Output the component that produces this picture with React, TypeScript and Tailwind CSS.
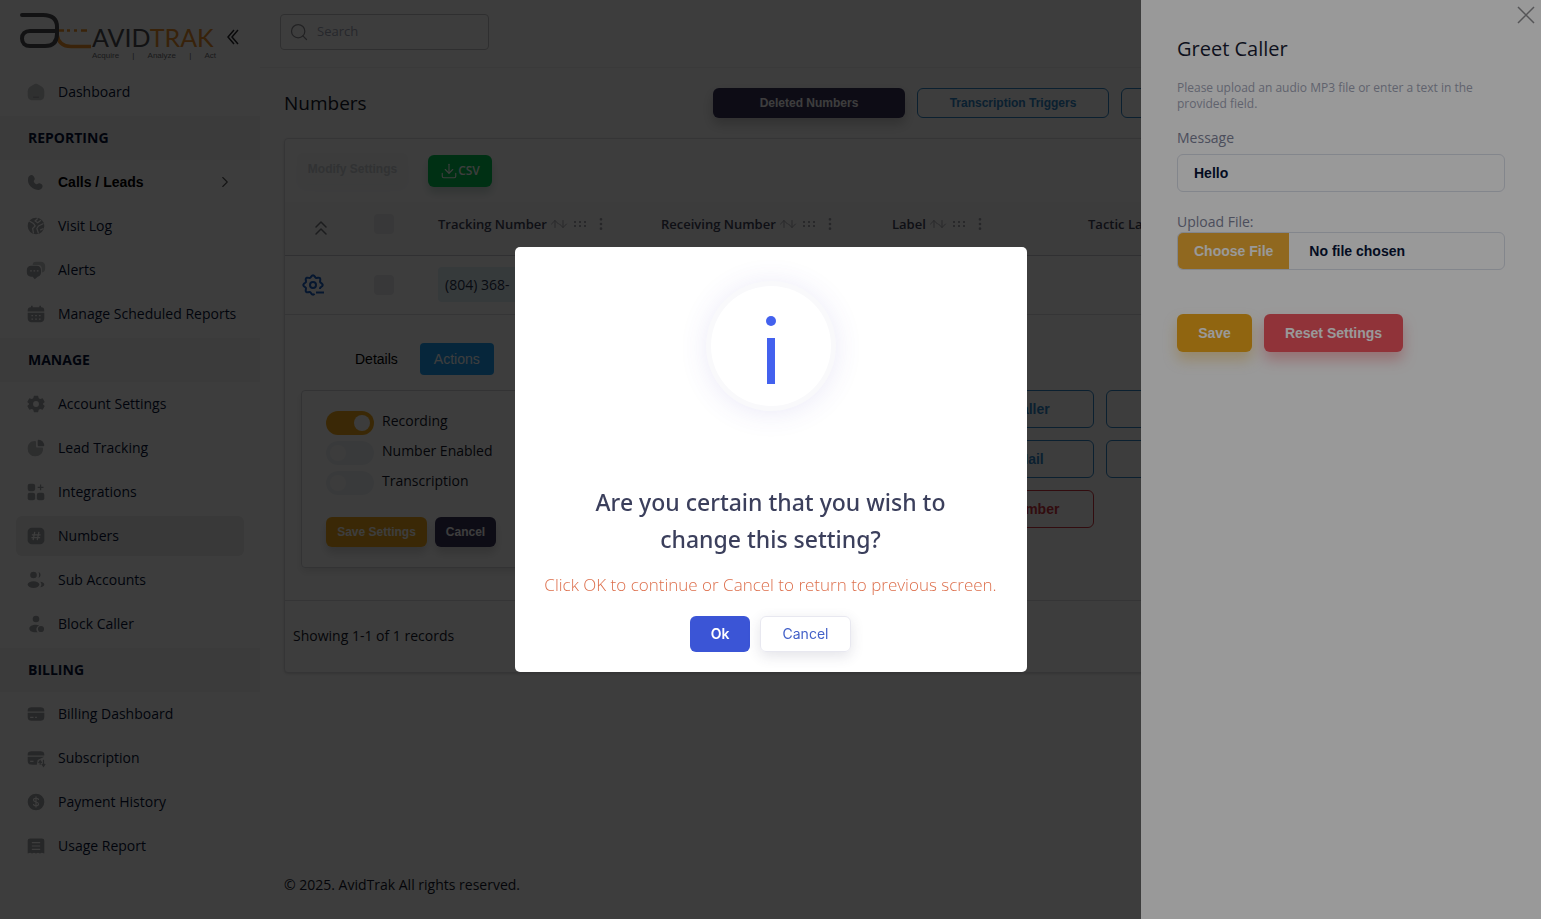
import { useState } from "react";
import type { ReactNode } from "react";
import clsx from "clsx";
import { ArrowDown, ArrowUp, ChevronRight, ChevronsUp, Download, EllipsisVertical, Search } from "lucide-react";

const icons: Record<string, ReactNode> = {
  home: (
    <>
      <path opacity="0.6" d="M12 2c-1 0-1.7.4-3.2 1.3l-3 1.9C3.8 6.5 2 8 2 11.5v3C2 19.5 3 22 8 22h8c5 0 6-2.5 6-7.5v-3c0-3.5-1.8-5-3.8-6.3l-3-1.9C13.7 2.4 13 2 12 2z" />
      <path d="M8.5 17.5h7v1.5h-7z" />
    </>
  ),
  phone: (
    <path d="M9.5 5.7l.7 1.2c.6 1.1.3 2.5-.6 3.4 0 0-1.1 1.1 1 3.1 2 2 3.1 1 3.1 1 .9-.9 2.3-1.2 3.4-.6l1.2.7c2 1 2.2 3.6.5 5.2-1 1-2.2 1.7-3.5 1.8-2.2.1-6-.5-9.7-4.2C1.9 13.6 2.4 9.7 2.5 8c0-1.3.8-2.6 1.8-3.5C5.9 2.8 8.5 3.7 9.5 5.7z" />
  ),
  globe: (
    <>
      <circle cx="12" cy="12" r="10" />
      <path d="M4 6l5 3 2 3-3 3 1 6M14 3l-3 3 3 2 4-3M21 9l-6 3-2 3 2 6M21 15l-4 2" fill="none" stroke="#fff" strokeWidth="1.5" />
    </>
  ),
  chat: (
    <>
      <path opacity="0.6" d="M12 2h6c3 0 5 2 5 5v3c0 3-1 5-4 5V11c0-3-1-5-4-5H8c0-3 1-4 4-4z" />
      <path d="M6 7h7c3 0 5 2 5 5v3c0 3-2 5-4 5l-3.5 3L8 20H6c-3 0-5-2-5-5v-3c0-3 2-5 5-5z" />
      <path d="M5 13h2M9 13h2M13 13h2" stroke="#fff" strokeWidth="1.5" />
    </>
  ),
  calendar: (
    <>
      <path d="M6 2h2v2h8V2h2v2c3 0 4 1 4 5H2c0-4 1-5 4-5zM2 10.5h20V16c0 4-1 6-6 6H8c-5 0-6-2-6-6z" />
      <path d="M6.5 14h2M11 14h2M15.5 14h2M6.5 18h2M11 18h2M15.5 18h2" stroke="#fff" strokeWidth="1.5" />
    </>
  ),
  gear: (
    <path
      fillRule="evenodd"
      d="M9.5 2h5l.8 3 1.7 1 3-.8 2.5 4.3-2.2 2.2v.6l2.2 2.2-2.5 4.3-3-.8-1.7 1-.8 3h-5l-.8-3-1.7-1-3 .8-2.5-4.3 2.2-2.2v-.6L1.5 9.5 4 5.2l3 .8 1.7-1zM12 8.5a3.5 3.5 0 100 7 3.5 3.5 0 000-7z"
    />
  ),
  pie: (
    <>
      <path opacity="0.7" d="M10.5 3.5C5 3.5 2 7.5 2 12.5a9 9 0 009.5 9.5c5 0 9-3.5 9-9 0-1-.5-1.5-1.5-1.5h-5c-1.5 0-2-.5-2-2V5c0-1-.5-1.5-1.5-1.5z" />
      <path d="M14 3.5C14 2.5 14.5 2 15.5 2 19 2.5 21.5 5 22 8.5c0 1-.5 1.5-1.5 1.5H16c-1.5 0-2-.5-2-2z" />
    </>
  ),
  widget: (
    <>
      <rect x="2" y="2" width="9" height="9" rx="2.5" />
      <rect x="2" y="13" width="9" height="9" rx="2.5" />
      <rect x="13" y="13" width="9" height="9" rx="2.5" />
      <path d="M17.5 3v7M14 6.5h7" stroke="currentColor" strokeWidth="1.5" />
    </>
  ),
  hash: (
    <>
      <rect x="2" y="2" width="20" height="20" rx="5" />
      <path d="M10.5 7l-2 10M15.5 7l-2 10M7 10.5h10.5M6.5 14H17" stroke="#fff" strokeWidth="1.5" />
    </>
  ),
  users: (
    <>
      <circle cx="9" cy="6" r="4" />
      <ellipse cx="9" cy="17.5" rx="7" ry="4" />
      <path d="M15 2.5a3.7 3.7 0 010 7c1-2 1-5 0-7zM17 14c3 .3 5 1.6 5 3.5s-2 3-5 3.3c2-2 2-4.8 0-6.8z" />
    </>
  ),
  blocked: (
    <>
      <circle cx="12" cy="6" r="4" />
      <path d="M12 13c-5 0-8 2-8 4.5S6 22 12 22h2a5 5 0 012-8.4c-1.2-.4-2.5-.6-4-.6z" />
      <circle cx="18" cy="18" r="3.7" />
    </>
  ),
  card: (
    <>
      <path d="M8 4h8c5 0 6 1 6 5H2c0-4 1-5 6-5zM2 10.5h20V14c0 5-1 6-6 6H8c-5 0-6-1-6-6z" />
      <path d="M5 16h4M11 16h2" stroke="#fff" strokeWidth="1.5" />
    </>
  ),
  cardSync: (
    <>
      <path d="M8 4h8c5 0 6 1 6 5H2c0-4 1-5 6-5zM2 10.5h20l-8 4-1 5.5H8c-5 0-6-1-6-6z" />
      <path d="M5 16h4" stroke="#fff" strokeWidth="1.5" />
      <path d="M15 18l2-3 2 3M17 15v5M19 19l2 3 2-3M21 14v8" fill="none" stroke="currentColor" strokeWidth="1.4" />
    </>
  ),
  dollar: (
    <>
      <circle cx="12" cy="12" r="10" />
      <path d="M15 9.5C15 8 13.7 7.5 12 7.5s-3 .8-3 2.2c0 3.2 6 1.4 6 4.6 0 1.4-1.3 2.2-3 2.2s-3-.8-3-2.2M12 5.5v13" fill="none" stroke="#fff" strokeWidth="1.4" />
    </>
  ),
  receipt: (
    <>
      <path d="M5 3h14c2 0 3 1 3 3v15l-3-1-2.3 1-2.3-1-2.4 1-2.4-1-2.3 1L5 20l-3 1V6c0-2 1-3 3-3z" />
      <path d="M7 8h10M7 12h10M7 16h10" stroke="#fff" strokeWidth="1.4" />
    </>
  ),
};

function NavIcon({ name }: { name: string }) {
  return (
    <svg viewBox="0 0 24 24" className="size-5 shrink-0 text-[#a0a2a6]" fill="currentColor" aria-hidden="true">
      {icons[name]}
    </svg>
  );
}

type NavItem = { label: string; icon: string; active?: boolean; expandable?: boolean };

const sections: { title?: string; items: NavItem[] }[] = [
  { items: [{ label: "Dashboard", icon: "home" }] },
  {
    title: "REPORTING",
    items: [
      { label: "Calls / Leads", icon: "phone", expandable: true },
      { label: "Visit Log", icon: "globe" },
      { label: "Alerts", icon: "chat" },
      { label: "Manage Scheduled Reports", icon: "calendar" },
    ],
  },
  {
    title: "MANAGE",
    items: [
      { label: "Account Settings", icon: "gear" },
      { label: "Lead Tracking", icon: "pie" },
      { label: "Integrations", icon: "widget" },
      { label: "Numbers", icon: "hash", active: true },
      { label: "Sub Accounts", icon: "users" },
      { label: "Block Caller", icon: "blocked" },
    ],
  },
  {
    title: "BILLING",
    items: [
      { label: "Billing Dashboard", icon: "card" },
      { label: "Subscription", icon: "cardSync" },
      { label: "Payment History", icon: "dollar" },
      { label: "Usage Report", icon: "receipt" },
    ],
  },
];

function Logo() {
  return (
    <div className="flex items-start">
      <svg viewBox="0 0 72 40" className="h-10 w-[72px] shrink-0" fill="none" aria-hidden="true">
        <path d="M38 18.5h6M47 18.5h3M54 18.5h3M61 18.5h6" stroke="#f0942a" strokeWidth="2.5" />
        <path d="M37 22c1 8 5 12.500 14 12.500h20" stroke="#f0942a" strokeWidth="3.5" />
        <path d="M2 3h21c9 0 14 4 14 12v7c0 8-4 12-12 12H10C5 34 2 31 2 26.5S5 19 10 19h27" stroke="#4b4c50" strokeWidth="4" strokeLinecap="round" />
      </svg>
      <div className="flex w-[124px] flex-col pt-2.5">
        <div className="font-[Lato] text-[25px] leading-[30px] text-[#4b4c50]">
          AVID<span className="text-[#e8902a]">TRAK</span>
        </div>
        <div className="flex justify-between font-['Liberation_Sans'] text-[8px] leading-[8px] text-[#6d6e72]">
          <span>Acquire</span>
          <span>|</span>
          <span>Analyze</span>
          <span>|</span>
          <span>Act</span>
        </div>
      </div>
    </div>
  );
}

function Sidebar() {
  return (
    <aside className="w-[260px] shrink-0 bg-white shadow-[4px_0_8px_rgba(0,0,0,0.03)]">
      <div className="flex h-[72px] items-start gap-2.5 pt-3 pl-5">
        <Logo />
        <button type="button" aria-label="Collapse menu" className="pt-4">
          <svg viewBox="0 0 16 18" className="h-[18px] w-4" fill="none" stroke="#25262c" strokeWidth="1.5" aria-hidden="true">
            <path d="M8 2L2 9l6 7M12 2L6 9l6 7" />
          </svg>
        </button>
      </div>
      <nav>
        {sections.map((section, i) => (
          <div key={section.title ?? i}>
            {section.title && (
              <h2 className="mb-0.5 flex h-11 items-center bg-[#f6f6f7] px-7 text-sm font-bold text-[#071437]">{section.title}</h2>
            )}
            <ul>
              {section.items.map((item) => (
                <li key={item.label} className="mb-1 px-4">
                  <a
                    href="#"
                    className={clsx("flex h-10 items-center gap-3 rounded-md px-2.5 text-sm text-[#071437]", item.active && "bg-[#ececec]")}
                  >
                    <NavIcon name={item.icon} />
                    <span className={clsx("whitespace-nowrap", item.expandable && "font-['Liberation_Sans'] font-bold text-black")}>
                      {item.label}
                    </span>
                    {item.expandable && <ChevronRight className="ml-auto size-4.5 text-[#555]" strokeWidth={1.5} />}
                  </a>
                </li>
              ))}
            </ul>
          </div>
        ))}
      </nav>
    </aside>
  );
}

const outline = "rounded-md border border-[#2f86c8] font-['Liberation_Sans'] font-bold text-[#2f86c8]";
const columns = ["Tracking Number", "Receiving Number", "Label", "Tactic Label"];
const actions = [
  "Call Flow", "Whisper", "Greet Caller", "Call Routing", "Webhooks",
  "Forwarding", "Schedule", "Voice Mail", "Messages", "Call Scoring",
];

function ColumnHeader({ label }: { label: string }) {
  return (
    <div className="flex items-center text-[13px] font-semibold whitespace-nowrap text-[#3f4358]">
      {label}
      <span className="ml-0.5 flex items-center text-[#a8a8b0]">
        <ArrowUp className="-mr-1 size-3" />
        <ArrowDown className="size-3" />
        <svg viewBox="0 0 14 8" className="ml-1 h-2 w-3.5" fill="currentColor" aria-hidden="true">
          {[1, 6, 11].map((x) => (
            <g key={x}>
              <rect x={x} y="1" width="2" height="2" />
              <rect x={x} y="5" width="2" height="2" />
            </g>
          ))}
        </svg>
      </span>
      <EllipsisVertical className="ml-1.5 size-4 text-[#a0a0a8]" />
    </div>
  );
}

// eight-lobed gear outline, left open at the lower right for the minus sign
const gearOutline = Array.from({ length: 73 }, (_, i) => {
  const angle = ((80 + i * 4.3) * Math.PI) / 180;
  const r = 8.7 + Math.cos(angle * 8);
  return `${i ? "L" : "M"}${(12 + r * Math.cos(angle)).toFixed(2)} ${(12 + r * Math.sin(angle)).toFixed(2)}`;
}).join("");

function NumbersTable() {
  return (
    <table className="w-full table-fixed border-collapse text-left">
      <colgroup>
        <col className="w-[72px]" />
        <col className="w-[53px]" />
        <col className="w-[223px]" />
        <col className="w-[231px]" />
        <col className="w-[196px]" />
        <col />
      </colgroup>
      <thead className="bg-[#f8f8fa]">
        <tr className="h-[53px] border-b border-[#c9cad2]">
          <th aria-label="Collapse all">
            <ChevronsUp className="mx-auto size-6 text-[#77787e]" strokeWidth={1.5} />
          </th>
          <th className="pb-2">
            <input type="checkbox" aria-label="Select all" className="mx-auto block size-5 appearance-none rounded bg-[#eaeaec]" />
          </th>
          {columns.map((label) => (
            <th key={label} className="pb-2 pl-7">
              <ColumnHeader label={label} />
            </th>
          ))}
        </tr>
      </thead>
      <tbody>
        <tr className="h-[59px] border-b border-[#dcdde2]">
          <td>
            <button type="button" aria-label="Number settings" className="ml-4 block text-[#1b5fc4]">
              <svg viewBox="0 0 24 24" className="size-6" fill="none" stroke="currentColor" strokeWidth="2" strokeLinejoin="round" aria-hidden="true">
                <circle cx="12" cy="12" r="3" />
                <path d={gearOutline} />
                <path d="M15 19.5h8" />
              </svg>
            </button>
          </td>
          <td>
            <input type="checkbox" aria-label="Select number" className="mx-auto block size-5 appearance-none rounded bg-[#eaeaec]" />
          </td>
          <td className="pl-7">
            <span className="inline-block w-[90px] rounded bg-[#e1f0f6] px-[7px] py-2 text-sm leading-[19px] text-[#252f4a]">(804) 368-</span>
          </td>
          <td />
          <td />
          <td />
        </tr>
      </tbody>
    </table>
  );
}

function Toggle({ label, on }: { label: string; on?: boolean }) {
  return (
    <label className="flex h-[30px] items-start gap-2 text-sm leading-5 text-[#14182a]">
      <input
        type="checkbox"
        role="switch"
        defaultChecked={on}
        className="grid h-6 w-12 shrink-0 appearance-none items-center rounded-full bg-[#eff2f5] px-1 before:size-4 before:rounded-full before:bg-[#fafafa] before:content-[''] checked:justify-items-end checked:bg-[#f1a91b]"
      />
      {label}
    </label>
  );
}

function Main() {
  return (
    <div className="flex min-w-0 flex-1 flex-col bg-[#fdfdfd]">
      <header className="flex h-[68px] shrink-0 items-start border-b border-[#f2f2f2] bg-white pt-3.5 pl-5">
        <label className="flex h-9 w-[209px] items-center gap-2 rounded border border-[#c4c4c8] px-2">
          <Search className="size-5 shrink-0 text-[#8c8c92]" strokeWidth={1.5} />
          <input
            type="search"
            placeholder="Search"
            aria-label="Search"
            className="w-full text-[13px] outline-none placeholder:text-[#a1a5b7]"
          />
        </label>
      </header>
      <main className="flex flex-1 flex-col px-6 pt-5">
        <div className="flex items-center justify-between">
          <h1 className="text-[19px] leading-7 text-[#14182a]">Numbers</h1>
          <div className="flex shrink-0 gap-3 text-xs">
            <button
              type="button"
              className="h-[30px] w-48 rounded-md bg-[#37325a] font-['Liberation_Sans'] font-bold text-white shadow-[0_6px_12px_rgba(0,0,0,0.2)]"
            >
              Deleted Numbers
            </button>
            <button type="button" className={clsx("h-[30px] w-48", outline)}>Transcription Triggers</button>
            <button type="button" aria-label="Bulk upload" className={clsx("h-[30px] w-48", outline)} />
            <button type="button" aria-label="Add number" className={clsx("h-[30px] w-48", outline)} />
          </div>
        </div>

        <section className="mt-5 rounded border border-[#dcdde2] bg-white shadow-sm">
          <div className="flex h-[63px] items-start gap-5 pt-4 pl-3">
            <button
              type="button"
              disabled
              className="-mt-0.5 h-[31px] w-[111px] rounded-md bg-[#f8fafa] font-['Liberation_Sans'] text-xs font-bold text-[#cccfd4] shadow-[0_6px_12px_rgba(0,60,80,0.04)]"
            >
              Modify Settings
            </button>
            <button
              type="button"
              className="flex h-8 w-16 items-center justify-center rounded-md bg-[#00c853] text-xs font-semibold text-white shadow-[0_6px_10px_rgba(0,80,60,0.2)]"
            >
              <Download className="size-4.5" strokeWidth={1.5} />
              CSV
            </button>
          </div>

          <NumbersTable />

          <div className="h-[286px] border-b border-[#dcdde2] px-4 pt-7">
            <div className="flex gap-2 pl-10 font-['Liberation_Sans'] text-sm">
              <button type="button" className="h-8 px-3.5 text-black">Details</button>
              <button type="button" className="h-8 rounded bg-[#1ba0f5] px-3.5 text-white">Actions</button>
            </div>
            <div className="mt-[15px] flex items-start gap-3">
              <div className="w-[253px] shrink-0 rounded border border-[#d4d5da] px-6 py-5 shadow-[0_4px_8px_rgba(0,0,0,0.1)]">
                <Toggle label="Recording" on />
                <Toggle label="Number Enabled" />
                <Toggle label="Transcription" />
                <div className="mt-4 flex gap-2 font-['Liberation_Sans'] text-xs font-bold text-white">
                  <button type="button" className="h-[30px] w-[101px] rounded-md bg-[#f1a91b] shadow-[0_6px_10px_rgba(0,0,0,0.15)]">
                    Save Settings
                  </button>
                  <button type="button" className="h-[30px] w-[61px] rounded-md bg-[#37325a] shadow-[0_6px_10px_rgba(0,0,0,0.15)]">
                    Cancel
                  </button>
                </div>
              </div>
              <div className="grid shrink-0 grid-cols-[repeat(5,168px)] gap-3 text-sm">
                {actions.map((label) => (
                  <button key={label} type="button" className={clsx("h-[38px]", outline)}>
                    {label}
                  </button>
                ))}
                <button
                  type="button"
                  className="col-start-3 h-[38px] rounded-md border border-[#d0353f] font-['Liberation_Sans'] font-bold text-[#d0353f]"
                >
                  Delete Number
                </button>
              </div>
            </div>
          </div>

          <p className="flex h-[71px] items-center px-2 text-sm text-[#14182a]">Showing 1-1 of 1 records</p>
        </section>

        <footer className="mt-auto pt-6 pb-6 text-sm text-[#14182a]">© 2025. AvidTrak All rights reserved.</footer>
      </main>
    </div>
  );
}

function GreetCallerDrawer() {
  const [message, setMessage] = useState("Hello");

  return (
    <div className="fixed inset-0 z-10 flex justify-end bg-black/60">
      <aside className="relative w-[400px] bg-white px-9 pt-[34px]">
        <button type="button" aria-label="Close" className="absolute top-0.5 right-0.5 text-[#8e8e92]">
          <svg viewBox="0 0 26 26" className="size-[26px]" stroke="currentColor" strokeWidth="1.5" aria-hidden="true">
            <path d="M5 5l16 16M21 5L5 21" />
          </svg>
        </button>
        <h2 className="text-xl leading-[30px] text-[#181c32]">Greet Caller</h2>
        <p className="mt-4 text-xs leading-4 text-[#a1a5b7]">Please upload an audio MP3 file or enter a text in the provided field.</p>
        <form onSubmit={(e) => e.preventDefault()}>
          <label htmlFor="message" className="mt-4 block text-sm text-[#7e8299]">Message</label>
          <input
            id="message"
            type="text"
            value={message}
            onChange={(e) => setMessage(e.target.value)}
            className="mt-1.5 h-[38px] w-full rounded-md border border-[#dbdfe9] px-4 font-['Liberation_Sans'] text-sm font-bold text-[#071437] outline-none"
          />
          <label htmlFor="audio" className="mt-5 block text-sm text-[#7e8299]">Upload File:</label>
          <input
            id="audio"
            type="file"
            className="block h-[38px] w-full overflow-hidden rounded-md border border-[#dbdfe9] font-['Liberation_Sans'] text-sm font-bold text-[#071437] file:mr-5 file:h-9 file:bg-[#f0ae35] file:px-4 file:font-bold file:text-white"
          />
          <div className="mt-11 flex gap-3 font-['Liberation_Sans'] text-sm font-bold text-white">
            <button type="submit" className="h-[38px] w-[75px] rounded-md bg-[#f1a91b] shadow-[0_8px_14px_rgba(241,169,27,0.35)]">
              Save
            </button>
            <button type="button" className="h-[38px] w-[139px] rounded-md bg-[#f05560] shadow-[0_8px_14px_rgba(240,85,96,0.4)]">
              Reset Settings
            </button>
          </div>
        </form>
      </aside>
    </div>
  );
}

function ConfirmDialog() {
  return (
    <div className="fixed inset-0 z-20 flex items-center justify-center bg-black/40">
      <div role="alertdialog" aria-labelledby="confirm-title" className="flex w-[512px] flex-col items-center rounded-[5px] bg-white pt-[39px] pb-5">
        <div className="flex size-[120px] items-center justify-center rounded-full bg-white shadow-[0_0_0_5px_#f9f9fb,0_2px_32px_rgba(80,70,190,0.16)]">
          <svg viewBox="0 0 20 78" className="h-[78px] w-5" fill="#4361ee" aria-hidden="true">
            <circle cx="10" cy="14" r="5" />
            <rect x="6" y="31" width="8" height="46" />
          </svg>
        </div>
        <h2
          id="confirm-title"
          className="mt-[78px] w-[400px] text-center font-['Noto_Sans',sans-serif] text-[23px] leading-[37px] font-medium text-[#3b3f5c]"
        >
          Are you certain that you wish to change this setting?
        </h2>
        <p className="mt-3 text-[17px] leading-[30px] font-light whitespace-nowrap text-[#dd6f4c]">
          Click OK to continue or Cancel to return to previous screen.
        </p>
        <div className="mt-4 flex gap-2.5 font-[Inter] text-sm">
          <button type="button" className="h-9 w-[60px] rounded-md bg-[#3b55d6] font-semibold text-white">Ok</button>
          <button type="button" className="h-9 w-[91px] rounded-md border border-[#e8e8f0] text-[#4361c8] shadow-[0_4px_14px_rgba(60,60,90,0.14)]">
            Cancel
          </button>
        </div>
      </div>
    </div>
  );
}

export default function App() {
  return (
    <div className="h-screen overflow-hidden font-['Open_Sans',sans-serif]">
      <div className="flex min-h-screen">
        <Sidebar />
        <Main />
      </div>
      <GreetCallerDrawer />
      <ConfirmDialog />
    </div>
  );
}
